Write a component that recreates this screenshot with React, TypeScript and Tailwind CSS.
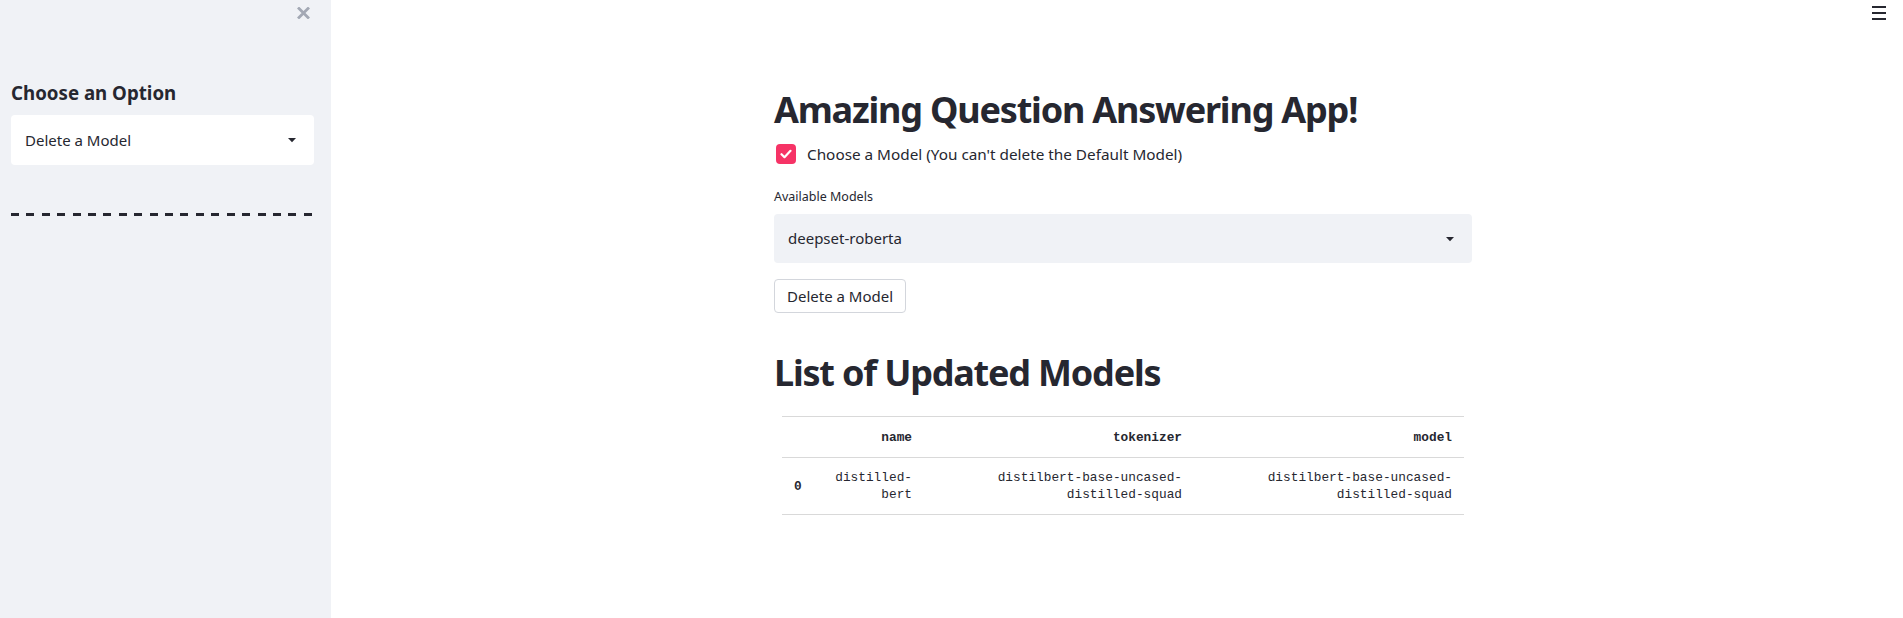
import React, { useState } from 'react';

const SANS = "font-['Noto_Sans',sans-serif]";

const Caret = () => (
  <svg width="10" height="6" viewBox="0 0 10 6" className="shrink-0">
    <path d="M1 1h8L5 5.2z" fill="#262730" />
  </svg>
);

const Sidebar = () => (
  <aside className="w-[331px] h-[618px] shrink-0 bg-[#f0f2f6] relative px-[11px]">
    <button className="absolute left-[297px] top-[7px] w-[13px] h-[12px] flex items-center justify-center">
      <svg width="13" height="12" viewBox="0 0 13 12">
        <path d="M2 1.5l9 9M11 1.5l-9 9" stroke="#a3a8b4" strokeWidth="2.8" strokeLinecap="square" />
      </svg>
    </button>
    <div className="pt-[80px]">
      <h3 className="text-[18.7px] leading-[26px] font-bold text-[#262730]">Choose an Option</h3>
      <div className="mt-[9px] h-[50px] w-[303px] bg-white rounded-[4px] flex items-center justify-between pl-[14px] pr-[17px] text-[15px] text-[#262730]">
        <span>Delete a Model</span>
        <Caret />
      </div>
      <div className="mt-[48px] w-[301px] flex justify-between">
        {Array.from({ length: 20 }).map((_, i) => (
          <div key={i} className="w-[8px] h-[3px] bg-[#262730]"></div>
        ))}
      </div>
    </div>
  </aside>
);

const rows = [
  { idx: '0', name: 'distilled-bert', tokenizer: 'distilbert-base-uncased-distilled-squad', model: 'distilbert-base-uncased-distilled-squad' },
];

const App: React.FC = () => {
  const [checked, setChecked] = useState(true);

  return (
    <div className={`flex w-[1903px] h-[618px] bg-white text-[#262730] ${SANS} overflow-hidden`}>
      <Sidebar />
      <main className="flex-1 relative flex justify-center pl-[12px]">
        <button className="absolute right-[17px] top-[6px] w-[14px] flex flex-col gap-[4px]">
          <span className="block h-[2px] w-[14px] bg-[#262730]"></span>
          <span className="block h-[2px] w-[14px] bg-[#262730]"></span>
          <span className="block h-[2px] w-[14px] bg-[#262730]"></span>
        </button>

        <div className="w-[698px] pt-[88px]">
          <h1 className="text-[36px] leading-[44px] font-bold tracking-[-1.2px]">Amazing Question Answering App!</h1>

          <label className="mt-[12px] flex items-center gap-[11px] cursor-pointer" onClick={() => setChecked(!checked)}>
            <span className={`w-[20px] h-[20px] rounded-[4px] flex items-center justify-center ml-[2px] ${checked ? 'bg-[#f63366]' : 'bg-[#f0f2f6]'}`}>
              {checked && (
                <svg width="12" height="10" viewBox="0 0 12 10">
                  <path d="M1.5 5.2l3 3 6-6.4" stroke="white" strokeWidth="2.2" fill="none" strokeLinecap="round" strokeLinejoin="round" />
                </svg>
              )}
            </span>
            <span className="text-[15.3px] leading-[20px]">Choose a Model (You can't delete the Default Model)</span>
          </label>

          <div className="mt-[25px] text-[12.5px] leading-[16px]">Available Models</div>
          <div className="mt-[9px] h-[49px] bg-[#f0f2f6] rounded-[4px] flex items-center justify-between pl-[14px] pr-[17px] text-[15px]">
            <span>deepset-roberta</span>
            <Caret />
          </div>

          <button className="mt-[16px] h-[34px] px-[12px] border border-[#d3d6dc] rounded-[4px] bg-white text-[15px] leading-[20px]">
            Delete a Model
          </button>

          <h2 className="mt-[38px] text-[36px] leading-[44px] font-bold tracking-[-1.2px]">List of Updated Models</h2>

          <table className="mt-[21px] ml-[8px] w-[682px] table-fixed border-collapse font-['Liberation_Mono',monospace] text-[12.8px] leading-[17px]">
            <colgroup>
              <col className="w-[41px]" />
              <col className="w-[101px]" />
              <col className="w-[270px]" />
              <col className="w-[270px]" />
            </colgroup>
            <thead>
              <tr className="border-y border-[#d9d9d9] h-[41px]">
                <th className="px-[12px]"></th>
                <th className="px-[12px] text-right font-bold text-[#262730]">name</th>
                <th className="px-[12px] text-right font-bold text-[#262730]">tokenizer</th>
                <th className="px-[12px] text-right font-bold text-[#262730]">model</th>
              </tr>
            </thead>
            <tbody>
              {rows.map((r) => (
                <tr key={r.idx} className="border-b border-[#d9d9d9] h-[57px]">
                  <td className="px-[12px] text-left font-bold">{r.idx}</td>
                  <td className="px-[12px] text-right">{r.name}</td>
                  <td className="px-[12px] text-right">{r.tokenizer}</td>
                  <td className="px-[12px] text-right">{r.model}</td>
                </tr>
              ))}
            </tbody>
          </table>
        </div>
      </main>
    </div>
  );
};

export default App;
